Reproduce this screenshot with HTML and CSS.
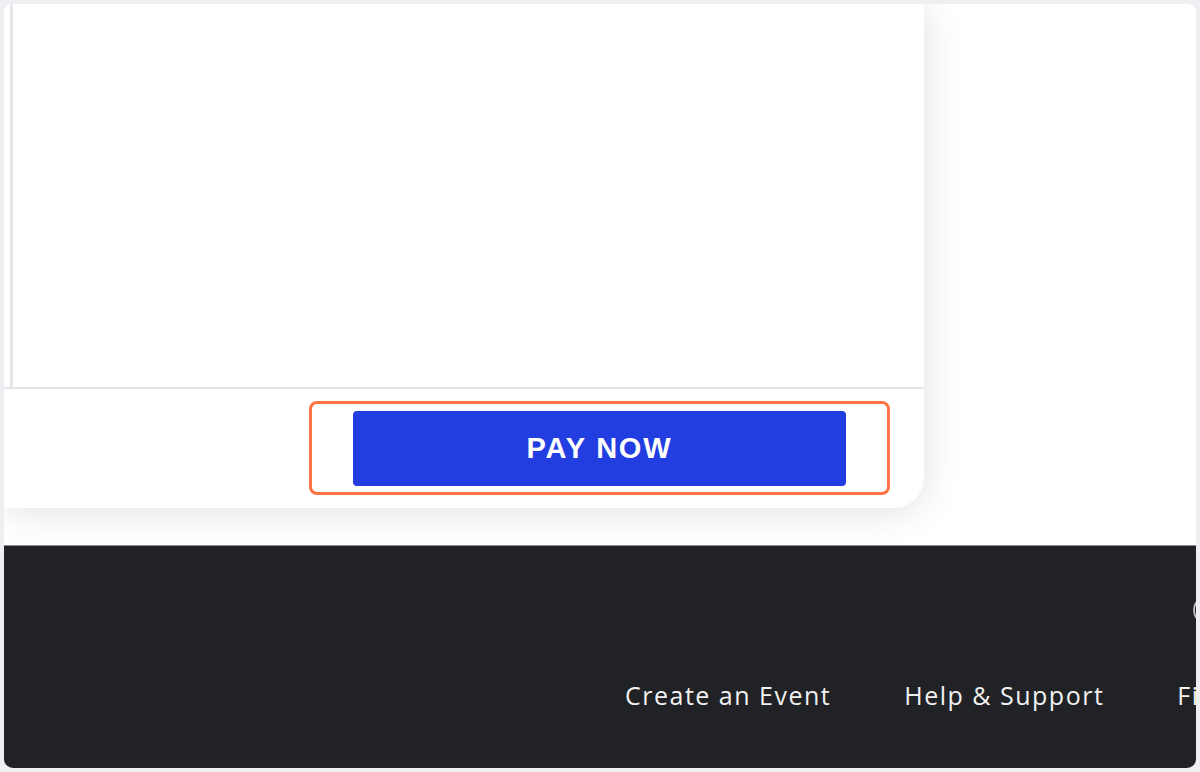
FILE: index.html
```html
<!DOCTYPE html>
<html>
<head>
<meta charset="utf-8">
<link rel="stylesheet" href="styles.css">
</head>
<body>
<div class="screen">
  <div class="top">
    <div class="card">
      <div class="card-body">
        <div class="panel"></div>
      </div>
      <div class="card-foot">
        <div class="highlight">
          <button class="pay">PAY NOW</button>
        </div>
      </div>
    </div>
  </div>
  <footer class="footer">
    <div class="icons"><span class="icon"></span></div>
    <nav class="links">
      <a>Create an Event</a>
      <a>Help &amp; Support</a>
      <a>Find Events</a>
    </nav>
  </footer>
</div>
</body>
</html>
```
FILE: styles.css
```css
* { box-sizing: border-box; }
html, body { margin: 0; padding: 0; }
body {
  background: #efeef3;
  width: 1200px;
  height: 772px;
  overflow: hidden;
  padding: 4px;
  font-family: "Open Sans", "Liberation Sans", sans-serif;
}
.screen {
  width: 1192px;
  height: 764px;
  background: #fff;
  border-radius: 9px;
  overflow: hidden;
  display: flex;
  flex-direction: column;
}
.top {
  height: 541px;
  flex: none;
  background: #fff;
}
.card {
  width: 920px;
  height: 504px;
  background: #fff;
  border-bottom-right-radius: 30px;
  box-shadow: 0 2px 38px rgba(0,0,0,0.13);
  display: flex;
  flex-direction: column;
  position: relative;
}
.card-body {
  height: 385px;
  flex: none;
  border-bottom: 2px solid #e4e4e6;
  padding-left: 6px;
}
.panel {
  height: 100%;
  border-left: 3px solid #e6e6e8;
}
.card-foot {
  flex: 1;
  display: flex;
  justify-content: flex-end;
  padding: 12px 34px 0 0;
}
.highlight {
  width: 581px;
  height: 94px;
  border: 3px solid #ff7445;
  border-radius: 8px;
  padding: 7px 41px 6px 41px;
}
.pay {
  width: 100%;
  height: 75px;
  border: none;
  border-radius: 4px;
  background: #233ee0;
  color: #fff;
  font-family: "Liberation Sans", Arial, sans-serif;
  font-weight: 700;
  font-size: 29px;
  letter-spacing: 1.8px;
  padding: 0;
  margin: 0;
  display: block;
}
.footer {
  flex: 1;
  background: #212226;
  border-top: 1px solid #8a8a8c;
  padding-top: 49px;
}
.icons {
  height: 30px;
  padding-left: 1189px;
  display: flex;
  white-space: nowrap;
}
.icon {
  flex: none;
  width: 30px;
  height: 30px;
  border-radius: 50%;
  border: 2px solid #bdbdc0;
}
.links {
  margin-top: 54px;
  padding-left: 621px;
  display: flex;
  gap: 73px;
  white-space: nowrap;
}
.links a {
  flex: none;
  color: #f1f1f1;
  font-size: 25px;
  line-height: 32px;
  letter-spacing: 1.5px;
}
```
